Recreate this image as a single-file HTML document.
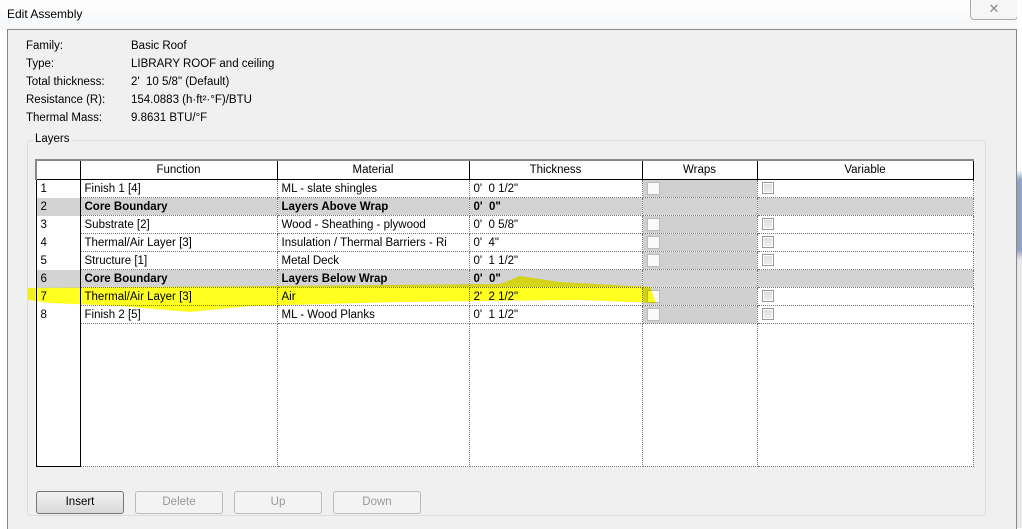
<!DOCTYPE html>
<html><head><meta charset="utf-8"><style>
body{margin:0;width:1022px;height:528px;overflow:hidden;background:#fff;font-family:"Liberation Sans",sans-serif;font-size:11.5px;color:#000;position:relative}
.a{position:absolute}
.title{left:0;top:0;width:1022px;height:30px;background:linear-gradient(#fff,#f4f6f8)}
.win{left:7px;top:29px;width:1008px;height:499px;background:#f0f0f0;border:1px solid #888;border-bottom:none}
.strip{left:1017px;top:0;width:5px;height:528px;background:linear-gradient(#fff 0,#fff 170px,#8ea3c9 180px,#8ea3c9 250px,#e8e8ea 260px)}
.grp{left:27px;top:140px;width:957px;height:374px;border:1px solid #d5dfe5;border-radius:3px}
table{position:absolute;left:35px;top:159px;border-collapse:collapse;background:#fff;table-layout:fixed}
td{height:17px;padding:0 0 0 4px;border:1px dotted #777;white-space:nowrap;overflow:hidden;font-size:11.5px}
th{height:16px;font-weight:normal;border:1px solid #000;background:#fff;font-size:11.5px;border-top:2px solid #888}
td.n{border:1px solid #000;border-top:none;border-bottom:none;background:#fff}
tr.g td{background:#d3d3d3;font-weight:bold}
td.w{background:#d0d0d0}
.cb{display:inline-block;width:11px;height:11px;border:1px solid #bbb;background:#fafafa;vertical-align:middle}
.cv{display:inline-block;width:10px;height:10px;border:1px solid #999;background:linear-gradient(#ddd,#eee);box-shadow:inset 0 0 0 1px #fff;vertical-align:middle}
.btn{top:491px;width:86px;height:21px;border:1px solid #bbb;border-radius:3px;background:#f3f3f3;color:#999;text-align:center;line-height:21px;font-size:11.5px}
</style></head><body>
<div class="a title"></div>
<div class="a" style="left:7px;top:7px;font-size:12px">Edit Assembly</div>
<div class="a" style="left:970px;top:0;width:46px;height:19px;border:1px solid #aaa;border-top:none;border-radius:0 0 4px 4px;background:#f6f6f6;text-align:center;color:#888;font-size:13px;line-height:18px">✕</div>
<div class="a win"></div>
<div class="a strip"></div>
<div class="a" style="left:26px;top:37px;line-height:18px">Family:<br>Type:<br>Total thickness:<br>Resistance (R):<br>Thermal Mass:</div>
<div class="a" style="left:131px;top:37px;line-height:18px">Basic Roof<br>LIBRARY ROOF and ceiling<br>2'&nbsp; 10 5/8" (Default)<br>154.0883 (h·ft²·°F)/BTU<br>9.8631 BTU/°F</div>
<div class="a grp"></div>
<div class="a" style="left:33px;top:133px;background:#f0f0f0;padding:0 2px">Layers</div>
<table>
<colgroup><col style="width:44px"><col style="width:197px"><col style="width:192px"><col style="width:173px"><col style="width:115px"><col style="width:216px"></colgroup>
<tr><th style="border-left:2px solid #888"></th><th>Function</th><th>Material</th><th>Thickness</th><th>Wraps</th><th>Variable</th></tr>
<tr><td class="n">1</td><td>Finish 1 [4]</td><td>ML - slate shingles</td><td>0'&nbsp; 0 1/2"</td><td class="w"><span class="cb"></span></td><td><span class="cv"></span></td></tr>
<tr class="g"><td class="n" style="font-weight:normal">2</td><td>Core Boundary</td><td>Layers Above Wrap</td><td>0'&nbsp; 0"</td><td></td><td></td></tr>
<tr><td class="n">3</td><td>Substrate [2]</td><td>Wood - Sheathing - plywood</td><td>0'&nbsp; 0 5/8"</td><td class="w"><span class="cb"></span></td><td><span class="cv"></span></td></tr>
<tr><td class="n">4</td><td>Thermal/Air Layer [3]</td><td>Insulation / Thermal Barriers - Ri</td><td>0'&nbsp; 4"</td><td class="w"><span class="cb"></span></td><td><span class="cv"></span></td></tr>
<tr><td class="n">5</td><td>Structure [1]</td><td>Metal Deck</td><td>0'&nbsp; 1 1/2"</td><td class="w"><span class="cb"></span></td><td><span class="cv"></span></td></tr>
<tr class="g"><td class="n" style="font-weight:normal">6</td><td>Core Boundary</td><td>Layers Below Wrap</td><td>0'&nbsp; 0"</td><td></td><td></td></tr>
<tr><td class="n">7</td><td>Thermal/Air Layer [3]</td><td>Air</td><td>2'&nbsp; 2 1/2"</td><td class="w"><span class="cb"></span></td><td><span class="cv"></span></td></tr>
<tr><td class="n">8</td><td>Finish 2 [5]</td><td>ML - Wood Planks</td><td>0'&nbsp; 1 1/2"</td><td class="w"><span class="cb"></span></td><td><span class="cv"></span></td></tr>
<tr><td class="n" style="height:142px;border-bottom:1px solid #000"></td><td></td><td></td><td></td><td></td><td></td></tr>
</table>
<svg class="a" style="left:0;top:0;mix-blend-mode:multiply" width="1022" height="528"><path d="M28 288 L500 284 L520 276 L560 282 L650 287 L656 303 L580 300 L400 302 L250 306 L190 312 L120 306 L50 303 L28 300Z" fill="#ffff20"/></svg>
<div class="a btn" style="left:36px;color:#000;border-color:#777;background:linear-gradient(#f2f2f2,#d8d8d8)">Insert</div>
<div class="a btn" style="left:135px">Delete</div>
<div class="a btn" style="left:234px">Up</div>
<div class="a btn" style="left:333px">Down</div>
</body></html>
